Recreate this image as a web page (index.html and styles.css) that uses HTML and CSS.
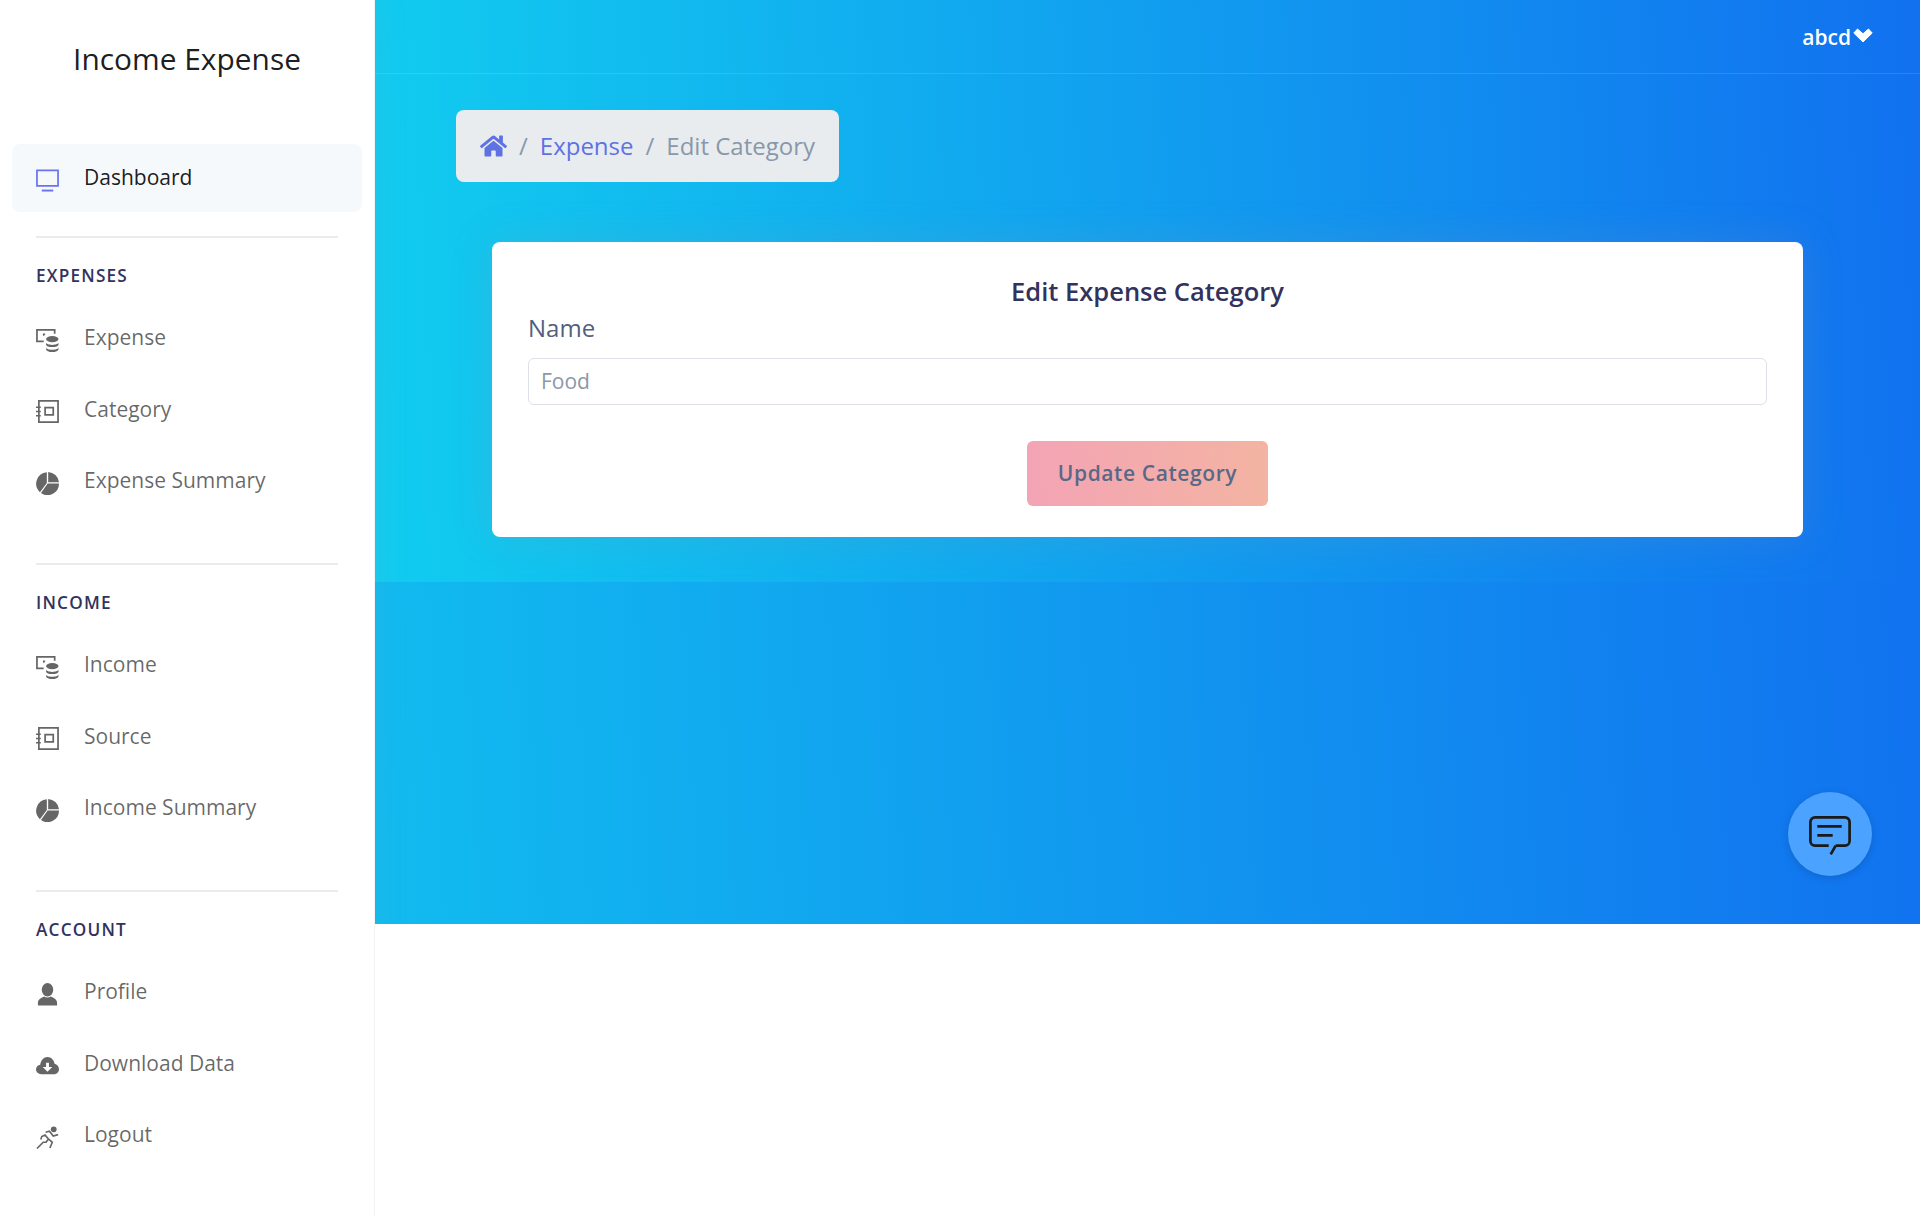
FILE: index.html
```html
<!DOCTYPE html>
<html lang="en">
<head>
<meta charset="utf-8">
<title>Income Expense</title>
<link rel="stylesheet" href="styles.css">
</head>
<body>
<svg class="defs" width="0" height="0" aria-hidden="true">
  <symbol id="i-coins" viewBox="0 0 24 24">
    <path d="M19.500 5V1H1v12h7" fill="none" stroke="currentColor" stroke-width="1.800"/>
    <path d="M8 7V5.500h1.500" fill="none" stroke="currentColor" stroke-width="1.500"/>
    <ellipse cx="17" cy="10.500" rx="6.500" ry="3.200" fill="currentColor"/>
    <path d="M10.500 14.200c0 1.300 2.800 2.400 6.500 2.400s6.500-1.100 6.500-2.400v1.900c0 1.600-2.900 2.800-6.500 2.800s-6.500-1.200-6.500-2.800z" fill="currentColor"/>
    <path d="M10.500 19.300c0 1.300 2.800 2.400 6.500 2.400s6.500-1.100 6.500-2.400V21c0 1.600-2.900 3-6.500 3s-6.500-1.400-6.500-3z" fill="currentColor"/>
  </symbol>
  <symbol id="i-book" viewBox="0 0 24 24">
    <path d="M3 1h20v22H3z" fill="none" stroke="currentColor" stroke-width="1.800"/>
    <path d="M0 7.500h5M0 12h5M0 16.500h5" fill="none" stroke="currentColor" stroke-width="1.600"/>
    <path d="M9.500 8h8.500v7.500H9.500z" fill="none" stroke="currentColor" stroke-width="1.800"/>
  </symbol>
  <symbol id="i-pie" viewBox="0 0 24 24">
    <path d="M11.300.2V11.600L4.100 21A12 12 0 0 1 11.300.2z" fill="currentColor"/>
    <path d="M12.700 0A12 12 0 0 1 24 10.600H12.700z" fill="currentColor"/>
    <path d="M24 12A12 12 0 0 1 5.200 22L12.200 12z" fill="currentColor"/>
  </symbol>
</svg>
<div class="app">
  <aside class="sidebar">
    <h1 class="brand">Income Expense</h1>
    <a class="item active">
      <svg class="icon" viewBox="0 0 24 24"><path d="M1 1.500h22v16H1z" fill="none" stroke="currentColor" stroke-width="1.800"/><path d="M6 22.500h12" fill="none" stroke="currentColor" stroke-width="2"/></svg>
      <span>Dashboard</span>
    </a>
    <section class="group">
      <h2 class="group-title">EXPENSES</h2>
      <a class="item"><svg class="icon"><use href="#i-coins"/></svg><span>Expense</span></a>
      <a class="item"><svg class="icon"><use href="#i-book"/></svg><span>Category</span></a>
      <a class="item"><svg class="icon"><use href="#i-pie"/></svg><span>Expense Summary</span></a>
    </section>
    <section class="group">
      <h2 class="group-title">INCOME</h2>
      <a class="item"><svg class="icon"><use href="#i-coins"/></svg><span>Income</span></a>
      <a class="item"><svg class="icon"><use href="#i-book"/></svg><span>Source</span></a>
      <a class="item"><svg class="icon"><use href="#i-pie"/></svg><span>Income Summary</span></a>
    </section>
    <section class="group">
      <h2 class="group-title">ACCOUNT</h2>
      <a class="item"><svg class="icon" viewBox="0 0 24 24"><ellipse cx="12" cy="7" rx="6" ry="7" fill="currentColor"/><path d="M2 23.500v-3c0-3.500 4-5.500 6.500-6.500 2 1.500 5 1.500 7 0 2.500 1 6.500 3 6.500 6.500v3z" fill="currentColor"/></svg><span>Profile</span></a>
      <a class="item"><svg class="icon" viewBox="0 0 24 24"><path d="M5.500 21C2.500 21 0 18.800 0 16c0-2.500 1.900-4.500 4.400-4.900C5 6.500 8.100 3 12 3c3.700 0 6.800 3 7.400 7.100 2.600.5 4.600 2.900 4.600 5.700 0 2.900-2.300 5.200-5.300 5.200z" fill="currentColor"/><path d="M10.500 9h3v4.500H17L12 18.500 7 13.500h3.500z" fill="#fff"/></svg><span>Download Data</span></a>
      <a class="item"><svg class="icon" viewBox="0 0 24 24"><circle cx="18.500" cy="3.500" r="3" fill="currentColor"/><path d="M1 23.500l6.500-6.500h3l2.500-3.500-3.500-4-3.500 1.500-1 3M10 6.500l4-1 4 5 5-1.500M13.500 14l3.500 3-2.500 6" fill="none" stroke="currentColor" stroke-width="1.700"/></svg><span>Logout</span></a>
    </section>
  </aside>
  <main class="main">
    <div class="stage">
      <div class="hero">
        <header class="topbar">
          <span class="user">abcd</span>
          <svg class="chevron" viewBox="0 0 20 15"><path fill="currentColor" stroke="currentColor" stroke-width="1" stroke-linejoin="round" d="M.8 5 4.500 1 10 5.800 15.500 1 19.200 5 10 14z"/></svg>
        </header>
        <nav class="crumbs">
          <svg class="home" viewBox="0 0 576 512"><path fill="currentColor" d="M280.37 148.26L96 300.11V464a16 16 0 0 0 16 16l112.06-.29a16 16 0 0 0 15.92-16V368a16 16 0 0 1 16-16h64a16 16 0 0 1 16 16v95.64a16 16 0 0 0 16 16.05L464 480a16 16 0 0 0 16-16V300L295.67 148.26a12.19 12.19 0 0 0-15.3 0zM571.6 251.47L488 182.56V44.05a12 12 0 0 0-12-12h-56a12 12 0 0 0-12 12v72.61L318.47 43a48 48 0 0 0-61 0L4.34 251.47a12 12 0 0 0-1.6 16.9l25.5 31A12 12 0 0 0 45.15 301l235.22-193.74a12.19 12.19 0 0 1 15.3 0L530.9 301a12 12 0 0 0 16.9-1.6l25.5-31a12 12 0 0 0-1.7-16.93z"/></svg>
          <span class="sep">/</span>
          <a class="crumb-link">Expense</a>
          <span class="sep">/</span>
          <span class="crumb-current">Edit Category</span>
        </nav>
        <form class="card">
          <h3 class="card-title">Edit Expense Category</h3>
          <label class="field-label" for="name">Name</label>
          <input class="field" id="name" type="text" placeholder="Food">
          <div class="actions"><button class="btn" type="button">Update Category</button></div>
        </form>
      </div>
      <button class="chat" type="button" aria-label="Chat">
        <svg class="chat-icon" viewBox="0 0 42 39"><path d="M26.700 29.600H36a4.600 4.600 0 0 0 4.600-4.600V6A4.600 4.600 0 0 0 36 1.400H6A4.600 4.600 0 0 0 1.400 6v19A4.600 4.600 0 0 0 6 29.600h13.700M26.700 29.600l-5 8.700M8.300 10.300h24.400M8.300 19.300h15.400" fill="none" stroke="#1a1a1a" stroke-width="2.700"/></svg>
      </button>
    </div>
    <div class="rest"></div>
  </main>
</div>
</body>
</html>
```

FILE: styles.css
```css
* { box-sizing: border-box; }
html, body { margin: 0; padding: 0; }
body { font-family: "Open Sans", sans-serif; background: #fff; height: 1216px; overflow: hidden; }
.defs { position: absolute; }
.app { display: flex; height: 1216px; }

.sidebar { position: relative; z-index: 1; width: 375px; flex: none; border-right: 1px solid #f1f3f6; background: #fff; padding: 0 12px; box-shadow: 0 0 32px rgba(136,152,170,.15); }
.brand { margin: 0; height: 144px; padding-top: 39px; text-align: center; font-size: 29.900px; line-height: 40px; font-weight: 400; color: rgba(0,0,0,.9); }
.item { display: flex; align-items: center; height: 71.500px; padding-left: 24px; color: rgba(0,0,0,.6); font-size: 21px; }
.item span { margin-left: 25px; position: relative; top: -3px; }
.icon { width: 23px; height: 23px; flex: none; color: #666; }
.item.active { height: 68px; background: #f6f9fc; border-radius: 8px; color: rgba(0,0,0,.9); margin-bottom: 24px; }
.item.active .icon { color: #6a72ee; margin-top: 4px; }
.item.active span { top: -1px; }
.group { margin: 0 24px 44.100px; border-top: 2px solid #e9ebee; }
.group .item { padding-left: 0; }
.group-title { margin: 0; height: 66.400px; padding-top: 25px; font-size: 17.200px; line-height: 26px; font-weight: 600; letter-spacing: 1.200px; color: #32325d; }

.main { flex: 1; min-width: 0; }
.stage { position: relative; height: 924px; background: linear-gradient(87deg, #11cdef, #1171ef) right top / 1920px 924px no-repeat; }
.rest { position: relative; z-index: 2; height: 292px; background: #fff; }
.hero { height: 582px; background: linear-gradient(87deg, #11cdef, #1171ef); }
.topbar { display: flex; align-items: center; justify-content: flex-end; height: 74px; padding-right: 47px; border-bottom: 1px solid rgba(255,255,255,.12); color: #fff; font-size: 21px; font-weight: 600; }
.user { line-height: 1; position: relative; top: 1px; }
.chevron { width: 20px; height: 15px; margin-top: -3px; margin-left: 2px; }

.crumbs { display: flex; align-items: center; width: fit-content; height: 72px; margin: 36px 0 0 81px; padding: 0 24px 2px; background: #e9ecef; border-radius: 8px; font-size: 24px; color: #8898aa; }
.home { width: 27px; height: 24px; margin-top: 2px; color: #5e72e4; }
.sep { margin: 0 12px; }
.crumb-link { color: #5e72e4; }
.card { margin: 60px 117px 0; height: 295px; padding: 31px 36px 0; background: #fff; border-radius: 8px; box-shadow: 0 0 40px rgba(136,152,170,.22); }
.card-title { margin: 0; text-align: center; font-size: 25.500px; line-height: 36px; font-weight: 600; color: #32325d; }
.field-label { display: block; margin-top: 1px; font-size: 24px; line-height: 36px; color: #525f7f; }
.field { display: block; width: 100%; height: 47px; margin-top: 12px; padding: 0 12px 2px; border: 1px solid #dde0e6; border-radius: 6px; font: 400 21px "Open Sans", sans-serif; color: #8898aa; background: #fff; outline: none; }
.field::placeholder { color: #8c98a8; opacity: 1; }
.actions { display: flex; justify-content: center; margin-top: 36px; }
.btn { width: 241px; height: 65px; padding: 0 0 1px; border: 0; border-radius: 6px; background: linear-gradient(87deg, #f3a4b5, #f3b4a2); color: #596887; font: 600 21px "Open Sans", sans-serif; letter-spacing: .6px; }

.chat { position: absolute; right: 48px; top: 792px; width: 84px; height: 84px; padding: 0; border: 0; border-radius: 50%; background: #4ba3ff; box-shadow: 0 2px 8px rgba(0,0,0,.15); display: flex; align-items: center; justify-content: center; }
.chat-icon { width: 42px; height: 39px; margin-top: 2px; }
```
